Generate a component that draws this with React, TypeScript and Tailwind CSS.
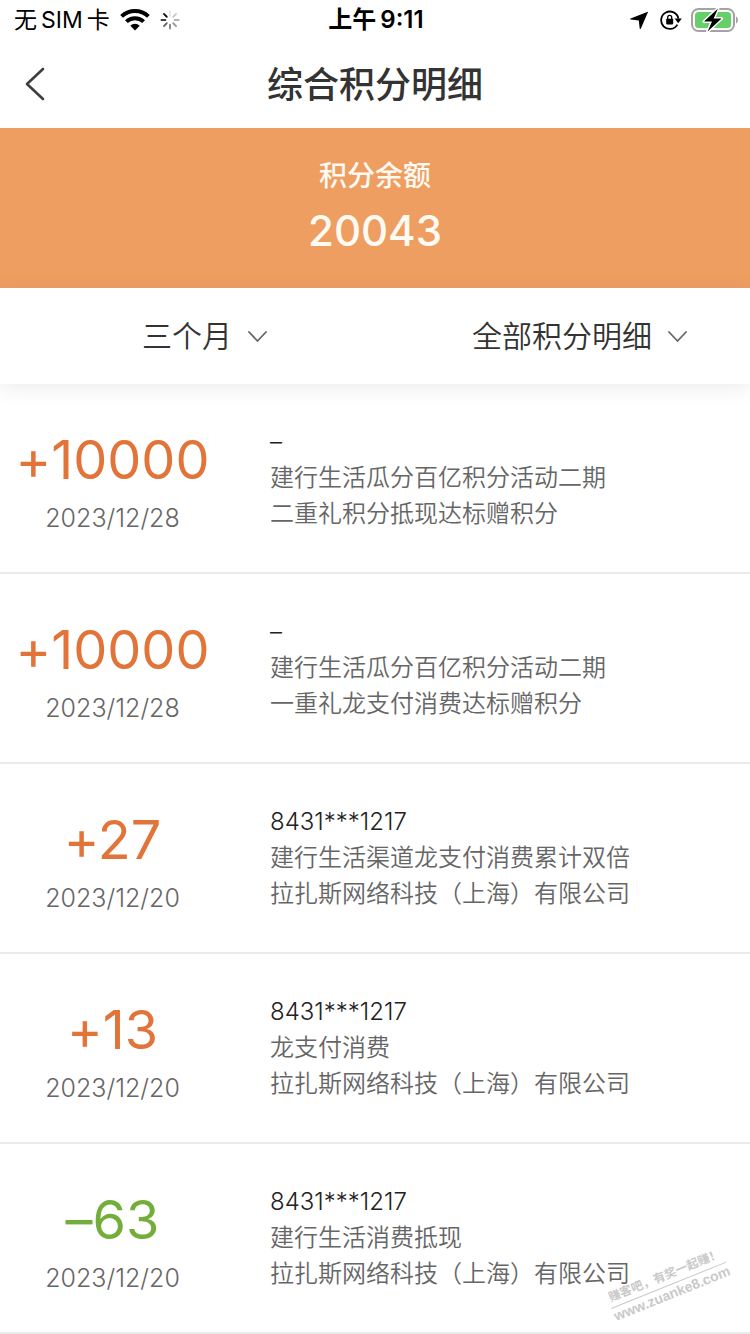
import React from 'react';

type PointRecord = {
  amount: string;
  date: string;
  card: string;
  title: string;
  detail: string;
};

const records: PointRecord[] = [
  { amount: '+10000', date: '2023/12/28', card: '–', title: '建行生活瓜分百亿积分活动二期', detail: '二重礼积分抵现达标赠积分' },
  { amount: '+10000', date: '2023/12/28', card: '–', title: '建行生活瓜分百亿积分活动二期', detail: '一重礼龙支付消费达标赠积分' },
  { amount: '+27', date: '2023/12/20', card: '8431***1217', title: '建行生活渠道龙支付消费累计双倍', detail: '拉扎斯网络科技（上海）有限公司' },
  { amount: '+13', date: '2023/12/20', card: '8431***1217', title: '龙支付消费', detail: '拉扎斯网络科技（上海）有限公司' },
  { amount: '–63', date: '2023/12/20', card: '8431***1217', title: '建行生活消费抵现', detail: '拉扎斯网络科技（上海）有限公司' },
];

// 加载图标的八根线，从顶部开始顺时针
const spokes = [0.1, 0.2, 0.3, 0.4, 0.5, 0.6, 0.75, 0.95];

function StatusBar() {
  return (
    <div className="grid grid-cols-3 items-center h-10 pl-3.5 pr-3 text-black">
      <div className="flex items-center gap-2.5">
        <span className="flex items-center gap-1 whitespace-nowrap text-[23px]">
          <span>无</span>
          <span>SIM</span>
          <span>卡</span>
        </span>
        <svg className="w-[30px] h-[22px]" viewBox="0 0 30 22" fill="none" stroke="#000" aria-hidden="true">
          <path d="M1.6 7.4a19.4 19.4 0 0 1 26.8 0" strokeWidth="4" />
          <path d="M6.4 12.6a12.4 12.4 0 0 1 17.2 0" strokeWidth="4" />
          <path d="M15 21.6l-4.7-4.8a6.6 6.6 0 0 1 9.4 0z" fill="#000" stroke="none" />
        </svg>
        <svg className="w-5 h-5" viewBox="0 0 20 20" stroke="#000" strokeWidth="1.8" strokeLinecap="round" aria-hidden="true">
          {spokes.map((opacity, i) => (
            <line key={i} x1="10" y1="1.4" x2="10" y2="5.4" opacity={opacity} transform={`rotate(${i * 45} 10 10)`} />
          ))}
        </svg>
      </div>

      <div className="flex justify-center gap-1 text-2xl font-semibold whitespace-nowrap">
        <span>上午</span>
        <span>9:11</span>
      </div>

      <div className="flex items-center justify-end gap-2">
        <svg className="w-[18px] h-[18px] mr-1" viewBox="0 0 18 18" aria-hidden="true">
          <path d="M17.8.8L.6 7.4c-.6.3-.5 1.1.2 1.2l8 .8.9 8.1c.1.7.9.7 1.2.1L18 1.1z" />
        </svg>
        <svg className="w-[22px] h-5" viewBox="0 0 22 20" fill="none" stroke="#000" aria-hidden="true">
          <path d="M17.4 14.6A8.7 8.7 0 1 1 18.4 8.6" strokeWidth="1.8" />
          <path d="M14.6 8.6h7.2l-3.6 4.6z" fill="#000" stroke="none" />
          <rect x="6.2" y="8.8" width="7" height="5.6" rx="0.8" fill="#000" stroke="none" />
          <path d="M7.7 9V7.4a2 2 0 0 1 4 0V9" strokeWidth="1.3" />
        </svg>
        <svg className="w-12 h-6" viewBox="0 0 48 24" aria-hidden="true">
          <rect x="2" y="1" width="42" height="22" rx="6.5" fill="#fff" stroke="#a3a3a3" strokeWidth="2" />
          <rect x="5" y="4" width="36" height="16" rx="3.5" fill="#65cf6a" />
          <path d="M46 8.5c2.6 1 2.6 6 0 7z" fill="#a3a3a3" />
          <path d="M28 .5L14 13.6h8L17.6 23.5 31.6 10.4h-8z" fill="#000" stroke="#fff" strokeWidth="3" strokeLinejoin="round" paintOrder="stroke" />
        </svg>
      </div>
    </div>
  );
}

function NavBar() {
  return (
    <header className="grid grid-cols-[1fr_auto_1fr] items-center h-[88px] px-6">
      <button type="button" aria-label="返回" className="justify-self-start cursor-pointer">
        <svg className="w-6 h-9" viewBox="0 0 24 36" fill="none" stroke="#3f3f3f" strokeWidth="2.6" strokeLinecap="round" strokeLinejoin="round">
          <path d="M19 3L3 18l16 15" />
        </svg>
      </button>
      <h1 className="pt-0.5 text-4xl font-medium text-[#333333]">综合积分明细</h1>
    </header>
  );
}

function Filter({ label, options }: { label: string; options: string[] }) {
  return (
    <label className="flex items-center justify-center gap-4">
      <select aria-label={label} className="appearance-none bg-transparent text-[30px] leading-10 font-[350] text-[#333333] outline-none">
        {options.map((option) => (
          <option key={option}>{option}</option>
        ))}
      </select>
      <svg className="w-5 h-3" viewBox="0 0 20 12" fill="none" stroke="#666" strokeWidth="1.8" strokeLinecap="round" strokeLinejoin="round" aria-hidden="true">
        <path d="M1 2l8.5 9L18 2" />
      </svg>
    </label>
  );
}

function RecordRow({ record }: { record: PointRecord }) {
  const spent = record.amount.startsWith('–');
  return (
    <li className="flex items-center py-9 border-b-2 border-[#ebebeb] font-[350]">
      <div className="w-[30%] text-center">
        <div className={`text-[54px] leading-[80px] font-normal [font-variant-ligatures:no-contextual] ${spent ? 'text-[#73ad3a]' : 'text-[#e2743a]'}`}>
          {record.amount}
        </div>
        <div className="text-[25px] leading-9 text-[#666666]">{record.date}</div>
      </div>
      <div className="flex-1 pl-[6%] text-2xl leading-9 text-[#666666]">
        <p className="text-[#222222]">{record.card}</p>
        <p>{record.title}</p>
        <p>{record.detail}</p>
      </div>
    </li>
  );
}

export default function App() {
  return (
    <div className="relative overflow-hidden bg-white font-['Inter','Noto_Sans_CJK_SC',sans-serif]">
      <StatusBar />
      <NavBar />

      {/* 积分余额 */}
      <section className="flex flex-col items-center h-40 pt-[26px] bg-[#ef9e62] text-[#fffaf2] font-medium">
        <h2 className="text-[28px] leading-[44px]">积分余额</h2>
        <p className="text-[42px] leading-[66px]">20043</p>
      </section>

      {/* 筛选 */}
      <div className="grid grid-cols-[41fr_34fr] h-24 shadow-[0_4px_20px_rgba(0,0,0,0.08)]">
        <Filter label="时间范围" options={['三个月', '六个月', '一年']} />
        <Filter label="明细类型" options={['全部积分明细', '获得积分', '使用积分']} />
      </div>

      {/* 明细列表 */}
      <ul>
        {records.map((record, i) => (
          <RecordRow key={i} record={record} />
        ))}
      </ul>

      {/* 水印 */}
      <div className="absolute right-5 bottom-8 -rotate-22 text-center font-bold text-[#c9c9c9] whitespace-nowrap">
        <div className="border-b border-[#c9c9c9] text-xs leading-5">赚客吧，有奖一起赚！</div>
        <div className="text-sm leading-4 font-['Liberation_Sans',sans-serif]">www.zuanke8.com</div>
      </div>
    </div>
  );
}
